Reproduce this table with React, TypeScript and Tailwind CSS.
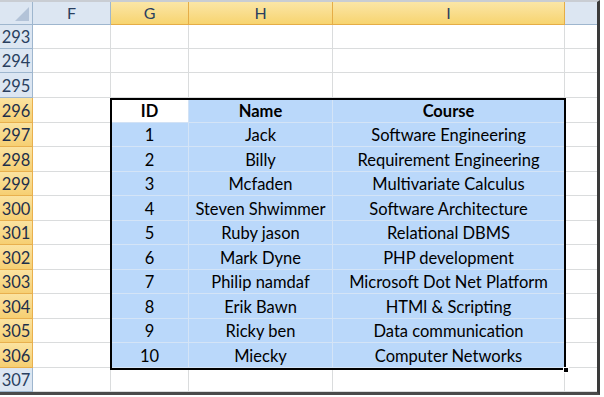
import React from "react";

const rows = [
  ["1", "Jack", "Software Engineering"],
  ["2", "Billy", "Requirement Engineering"],
  ["3", "Mcfaden", "Multivariate Calculus"],
  ["4", "Steven Shwimmer", "Software Architecture"],
  ["5", "Ruby jason", "Relational DBMS"],
  ["6", "Mark Dyne", "PHP development"],
  ["7", "Philip namdaf", "Microsoft Dot Net Platform"],
  ["8", "Erik Bawn", "HTMl & Scripting"],
  ["9", "Ricky ben", "Data communication"],
  ["10", "Miecky", "Computer Networks"],
];

// row heights so gridlines land on whole pixels
const heights: Record<number, string> = {
  293: "h-[24px]",
  294: "h-[24px]",
  295: "h-[25px]",
  296: "h-[25px]",
  297: "h-[24px]",
  298: "h-[25px]",
  299: "h-[24px]",
  300: "h-[25px]",
  301: "h-[24px]",
  302: "h-[25px]",
  303: "h-[24px]",
  304: "h-[25px]",
  305: "h-[24px]",
  306: "h-[25px]",
  307: "h-[24px]",
};

function RowHead({ n, selected }: { n: number; selected: boolean }) {
  return (
    <div
      className={
        "w-[33px] shrink-0 flex items-center justify-center pt-[2px] border-r border-b text-[16.5px] " +
        (selected
          ? "bg-gradient-to-b from-[#fbe3a0] to-[#f6cf72] border-[#e8b04e] text-[#1e2f4a]"
          : "bg-[#dce6f2] border-[#9eb6ce] text-[#2a3f5f]")
      }
    >
      {n}
    </div>
  );
}

function Cell({
  w,
  sel,
  white,
  bold,
  children,
}: {
  w: string;
  sel?: boolean;
  white?: boolean;
  bold?: boolean;
  children?: React.ReactNode;
}) {
  return (
    <div
      className={
        w +
        " shrink-0 flex items-center justify-center pt-[2px] border-r border-b text-[16.5px] text-black whitespace-nowrap " +
        (bold ? "font-bold " : "") +
        (sel
          ? white
            ? "bg-white border-[#d2e2f5]"
            : "bg-[#bad8fa] border-[#d4e4f6]"
          : "bg-white border-[#dadcdd]")
      }
    >
      {children}
    </div>
  );
}

export default function App() {
  const rowNums = Array.from({ length: 15 }, (_, i) => 293 + i);
  return (
    <div
      className="w-[604px] h-[397px] bg-white overflow-hidden"
      style={{ fontFamily: "Lato, 'Open Sans', sans-serif" }}
    >
      <div className="w-[600px] h-[395px] border-t-2 border-[#c9cdd3] border-r-[3px] border-r-[#3a3a3a] border-b-[3px] border-b-[#4a4a4a] relative">
        {/* column headers */}
        <div className="flex h-[23px]">
          <div className="w-[33px] shrink-0 bg-[#dce6f2] border-r border-b border-[#9eb6ce] flex items-end justify-end p-[3px]">
            <svg width="14" height="14" viewBox="0 0 14 14">
              <polygon points="14,0 14,14 0,14" fill="#b3c3d8" />
            </svg>
          </div>
          <div className="w-[78px] shrink-0 bg-[#dce6f2] border-r border-b border-[#9eb6ce] flex items-center justify-center text-[16px] text-[#2a3f5f]">
            F
          </div>
          {[
            ["G", "w-[78px]"],
            ["H", "w-[144px]"],
            ["I", "w-[232px]"],
          ].map(([l, w]) => (
            <div
              key={l}
              className={
                w +
                " shrink-0 bg-gradient-to-b from-[#fbe6a6] to-[#f7d46f] border-r border-b border-[#e5ad47] flex items-center justify-center text-[16px] text-[#2a3f5f]"
              }
            >
              {l}
            </div>
          ))}
          <div className="flex-1 bg-[#dce6f2] border-b border-[#9eb6ce]" />
        </div>

        {rowNums.map((n) => {
          const inTable = n >= 296 && n <= 306;
          const idx = n - 297;
          const data = n === 296 ? ["ID", "Name", "Course"] : idx >= 0 && idx < 10 ? rows[idx] : ["", "", ""];
          return (
            <div key={n} className={"flex " + heights[n]}>
              <RowHead n={n} selected={inTable} />
              <Cell w="w-[78px]" />
              <Cell w="w-[78px]" sel={inTable} white={n === 296} bold={n === 296}>
                {data[0]}
              </Cell>
              <Cell w="w-[144px]" sel={inTable} bold={n === 296}>
                {data[1]}
              </Cell>
              <Cell w="w-[232px]" sel={inTable} bold={n === 296}>
                {data[2]}
              </Cell>
              <div className="flex-1 border-b border-[#dadcdd]" />
            </div>
          );
        })}

        {/* selection outline over G296:I306 */}
        <div className="absolute left-[110px] top-[96px] w-[456px] h-[272px] border-2 border-black pointer-events-none" />
        <div className="absolute left-[563px] top-[365px] w-[6px] h-[6px] bg-black border border-white pointer-events-none" />
      </div>
    </div>
  );
}
